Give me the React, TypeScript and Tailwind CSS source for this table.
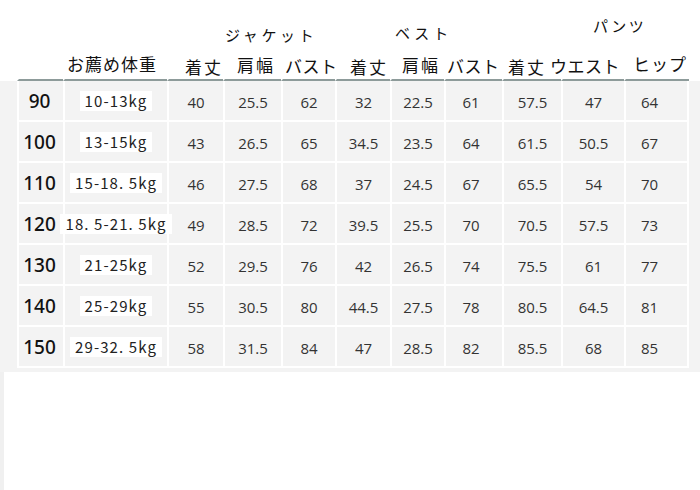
import React from "react";

const cols =
  "grid grid-cols-[46px_104px_56px_58px_54px_55px_54px_58px_59px_63px_65px] w-[672px]";

const rows: [string, string, string[]][] = [
  ["90", "10-13kg", ["40", "25.5", "62", "32", "22.5", "61", "57.5", "47", "64"]],
  ["100", "13-15kg", ["43", "26.5", "65", "34.5", "23.5", "64", "61.5", "50.5", "67"]],
  ["110", "15-18. 5kg", ["46", "27.5", "68", "37", "24.5", "67", "65.5", "54", "70"]],
  ["120", "18. 5-21. 5kg", ["49", "28.5", "72", "39.5", "25.5", "70", "70.5", "57.5", "73"]],
  ["130", "21-25kg", ["52", "29.5", "76", "42", "26.5", "74", "75.5", "61", "77"]],
  ["140", "25-29kg", ["55", "30.5", "80", "44.5", "27.5", "78", "80.5", "64.5", "81"]],
  ["150", "29-32. 5kg", ["58", "31.5", "84", "47", "28.5", "82", "85.5", "68", "85"]],
];

const jp = { fontFamily: '"Noto Sans CJK JP", "Noto Sans", sans-serif' };
const num = { fontFamily: '"Open Sans", "Noto Sans", sans-serif' };
const sc = { fontFamily: '"Noto Sans CJK SC", "Noto Sans", sans-serif' };

function Label({ text, cls }: { text: string; cls: string }) {
  return (
    <div
      className={`border-l-2 border-white border-b-2 border-b-[#8d9b9a] flex items-end whitespace-nowrap text-[17px] leading-[17px] text-[#111] ${cls}`}
      style={jp}
    >
      {text}
    </div>
  );
}

export default function App() {
  return (
    <div className="w-[700px] h-[490px] bg-white flex flex-col overflow-hidden">
      {/* header */}
      <div className="pl-[17px] h-[81px] flex flex-col">
        <div className={`${cols} h-[47px] text-[15px] leading-[16px] text-[#111]`} style={jp}>
          <div className="col-span-2" />
          <div className="col-span-3 pl-[58px] pt-[27px] tracking-[3.6px] whitespace-nowrap">ジャケット</div>
          <div className="col-span-3 pl-[60px] pt-[25px] tracking-[4px] whitespace-nowrap">ベスト</div>
          <div className="col-span-3 pl-[91px] pt-[18px] tracking-[2.5px] whitespace-nowrap">パンツ</div>
        </div>
        <div className={`${cols} h-[34px]`}>
          <div className="border-l-2 border-white border-b-2 border-b-[#8d9b9a]" />
          <Label text="お薦め体重" cls="pl-[2px] pb-[7px] tracking-[1px]" />
          <Label text="着丈" cls="pl-[16px] pb-[4px] tracking-[2px]" />
          <Label text="肩幅" cls="pl-[12px] pb-[6px] tracking-[2px]" />
          <Label text="バスト" cls="pl-[2px] pb-[5px] tracking-[0.5px]" />
          <Label text="着丈" cls="pl-[13px] pb-[4px] tracking-[2px]" />
          <Label text="肩幅" cls="pl-[10px] pb-[6px] tracking-[2px]" />
          <Label text="バスト" cls="pl-[1px] pb-[5px] tracking-[0.5px]" />
          <Label text="着丈" cls="pl-[4px] pb-[4px] tracking-[2px]" />
          <div
            className="border-l-2 border-white border-b-2 border-b-[#8d9b9a] flex items-end whitespace-nowrap text-[17px] leading-[17px] text-[#111] pb-[5px] tracking-[0.5px]"
            style={jp}
          >
            <span className="-ml-[13px]">ウエスト</span>
          </div>
          <Label text="ヒップ" cls="pl-[7px] pb-[7px] tracking-[1px]" />
        </div>
      </div>

      {/* body */}
      <div className="bg-[#f3f3f3] pl-[17px] pb-[4px]">
        {rows.map(([h, w, vals]) => (
          <div key={h} className={`${cols} h-[41px]`}>
            <div
              className="border-l-2 border-b-2 border-white flex items-center justify-center pr-[3px] pt-[1px] text-[19px] font-medium text-[#111]"
              style={{ fontFamily: '"Noto Sans", sans-serif' }}
            >
              {h}
            </div>
            <div className="border-l-2 border-b-2 border-white flex items-center justify-center overflow-visible">
              <span
                className="bg-white px-[5px] py-[2px] text-[15px] leading-[16px] tracking-[1.1px] text-[#222] whitespace-nowrap"
                style={sc}
              >
                {w}
              </span>
            </div>
            {vals.map((v, i) => (
              <div
                key={i}
                className={`border-l-2 border-b-2 border-white flex items-center justify-center pt-[4px] text-[15px] text-[#333] ${
                  i === 8 ? "border-r-2 pr-[14px]" : ""
                } ${i === 5 ? "pr-[6px]" : ""}`}
                style={num}
              >
                {v}
              </div>
            ))}
          </div>
        ))}
      </div>

      {/* bottom */}
      <div className="flex-1 flex">
        <div className="w-[4px] bg-[#f0f0f0]" />
      </div>
    </div>
  );
}
